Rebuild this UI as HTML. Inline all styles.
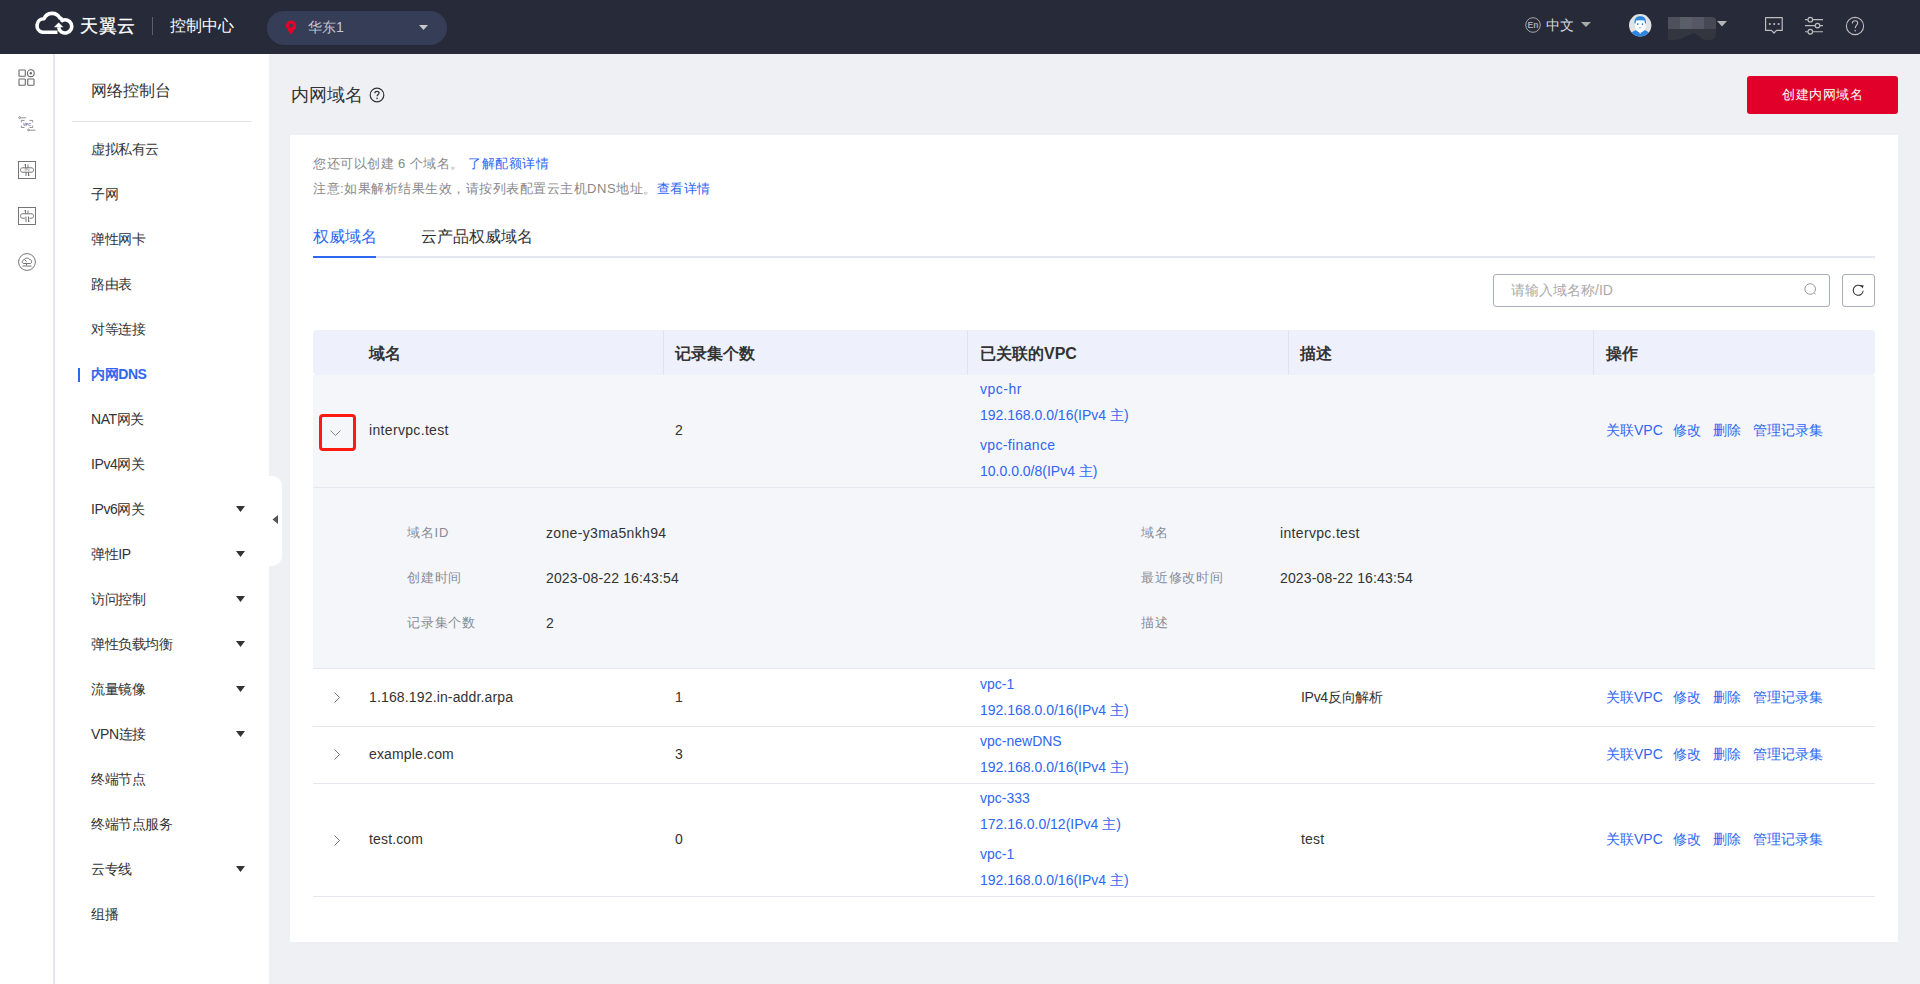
<!DOCTYPE html>
<html><head><meta charset="utf-8">
<style>
*{box-sizing:border-box;margin:0;padding:0}
html,body{width:1920px;height:984px;overflow:hidden}
body{font-family:"Liberation Sans",sans-serif;background:#eff0f4;color:#333;position:relative;font-size:14px}
.abs{position:absolute}
.t{position:absolute;white-space:nowrap;line-height:1}
#top{position:absolute;left:0;top:0;width:1920px;height:54px;background:#262a39}
#rail{position:absolute;left:0;top:54px;width:55px;height:930px;background:#fff;border-right:2px solid #e3e6ef}
#side{position:absolute;left:55px;top:54px;width:214px;height:930px;background:#fff}
.si{left:91px;font-size:14px;color:#333;line-height:20px;letter-spacing:-0.4px}
.th{top:345px;font-size:16px;font-weight:bold;color:#333;line-height:18px}
.td{font-size:14px;color:#333;line-height:16px;letter-spacing:0.15px}
.lk{font-size:14px;color:#2f66f2;line-height:16px}
.dl{font-size:13px;color:#878c96;line-height:16px;letter-spacing:0.8px}
.act{color:#2f66f2;font-weight:bold}
</style></head><body>
<div id="top">
  <!-- logo -->
  <svg class="abs" style="left:30px;top:8px" width="50" height="32" viewBox="0 0 50 32">
    <path d="M27.5 24.3 H12.3 A6.9 6.9 0 0 1 14.0 10.7 A8.75 8.75 0 0 1 29.8 10 A2.6 2.6 0 0 1 32 12.6 A6.6 6.6 0 1 1 28.6 19.3" fill="none" stroke="#fff" stroke-width="3.6" stroke-linejoin="round"/>
    <path d="M23.8 19.2 H33.4 L28.7 14.6 Z" fill="#fff"/>
  </svg>
  <div class="t" style="left:80px;top:16px;font-size:18px;color:#fff;line-height:20px;letter-spacing:0.6px;-webkit-text-stroke:0.3px #fff">天翼云</div>
  <div class="abs" style="left:152px;top:17px;width:1px;height:18px;background:#5a5f6e"></div>
  <div class="t" style="left:170px;top:18px;font-size:16px;color:#fff">控制中心</div>
  <div class="abs" style="left:267px;top:11px;width:180px;height:34px;border-radius:17px;background:#353d57"></div>
  <svg class="abs" style="left:285px;top:20px" width="12" height="15" viewBox="0 0 12 15"><path d="M6 14.5 C6 14.5 0.8 8.5 0.8 5.6 A5.2 5.2 0 0 1 11.2 5.6 C11.2 8.5 6 14.5 6 14.5Z" fill="#e60027"/><circle cx="6" cy="5.6" r="2" fill="#353d57"/></svg>
  <div class="t" style="left:308px;top:20px;font-size:14px;color:#c5c8d2">华东1</div>
  <svg class="abs" style="left:419px;top:25px" width="9" height="5"><path d="M0 0 L9 0 L4.5 5Z" fill="#c8c8cc"/></svg>

  <!-- right side -->
  <svg class="abs" style="left:1525px;top:17px" width="16" height="16" viewBox="0 0 16 16"><circle cx="8" cy="8" r="7.3" fill="none" stroke="#a8a8a8" stroke-width="1"/><text x="8" y="11.2" font-size="8.5" text-anchor="middle" fill="#a8a8a8" font-family="Liberation Sans" font-weight="bold">En</text></svg>
  <div class="t" style="left:1546px;top:18px;font-size:14px;color:#d6d8de">中文</div>
  <svg class="abs" style="left:1581px;top:22px" width="10" height="5"><path d="M0 0 L10 0 L5 5Z" fill="#aaa"/></svg>
  <!-- avatar -->
  <svg class="abs" style="left:1629px;top:14px" width="23" height="23" viewBox="0 0 23 23">
    <clipPath id="avc"><circle cx="11.2" cy="11.3" r="11.2"/></clipPath>
    <g clip-path="url(#avc)">
    <rect width="23" height="23" fill="#e2e3e6"/>
    <path d="M1 23 C2 17.5 5 16.5 8 16 L11.2 20 L14.5 16 C17.5 16.5 20.5 17.5 21.5 23Z" fill="#2d86e0"/>
    <path d="M6 6.5 H16.5 V13 C16.5 16 14 18 11.2 18 C8.5 18 6 16 6 13Z" fill="#fff"/>
    <path d="M5.5 9.5 C5 4 8 2.2 11.2 2.2 C14.5 2.2 17.5 4 17 9.5 L16 9.5 L15.5 6.5 C13 6 9.5 6 7 6.5 L6.5 9.5Z" fill="#2d86e0"/>
    <rect x="8" y="9.3" width="1.4" height="1.8" fill="#3b7fd0"/><rect x="12.8" y="9.3" width="1.4" height="1.8" fill="#3b7fd0"/>
    <rect x="10" y="13.2" width="2.4" height="0.9" fill="#8fb6e6"/>
    </g>
  </svg>
  <div class="abs" style="left:1668px;top:17px;width:12px;height:12px;background:#4e505b"></div>
  <div class="abs" style="left:1680px;top:17px;width:12px;height:12px;background:#5a5e69"></div>
  <div class="abs" style="left:1692px;top:17px;width:12px;height:12px;background:#565764"></div>
  <div class="abs" style="left:1704px;top:17px;width:12px;height:12px;background:#464853;border-radius:0 4px 0 0"></div>
  <svg class="abs" style="left:1668px;top:29px" width="48" height="12" viewBox="0 0 48 12"><path d="M0 0 H48 V5 C48 9 45 11 40 11 C35 11 33 9 31 7 L26 4 L14 9 C11 11 7 11 0 11Z" fill="#33363f"/></svg>
  <svg class="abs" style="left:1717px;top:21px" width="10" height="6"><path d="M0 0 L10 0 L5 5.5Z" fill="#b5b5b8"/></svg>
  <!-- message -->
  <svg class="abs" style="left:1764px;top:16px" width="20" height="20" viewBox="0 0 20 20"><path d="M1.6 1.6 H18.2 V14.4 H12.6 L10 17 L7.4 14.4 H1.6 Z" fill="none" stroke="#bebebe" stroke-width="1.2" stroke-linejoin="round"/><rect x="4.9" y="7.1" width="1.8" height="1.8" fill="#bebebe"/><rect x="9.3" y="7.1" width="1.8" height="1.8" fill="#bebebe"/><rect x="13.7" y="7.1" width="1.8" height="1.8" fill="#bebebe"/></svg>
  <!-- sliders -->
  <svg class="abs" style="left:1804px;top:16px" width="20" height="20" viewBox="0 0 20 20"><g stroke="#bebebe" stroke-width="1.2" fill="none"><path d="M1 3.7 H3.8 M8.8 3.7 H19"/><circle cx="6.3" cy="3.7" r="2.3"/><path d="M1 9.6 H11 M16 9.6 H19"/><circle cx="13.5" cy="9.6" r="2.3"/><path d="M1 15.75 H3.8 M8.8 15.75 H19"/><circle cx="6.3" cy="15.75" r="2.3"/></g></svg>
  <!-- help -->
  <svg class="abs" style="left:1845px;top:16px" width="20" height="20" viewBox="0 0 20 20"><circle cx="10" cy="10" r="8.6" fill="none" stroke="#bebebe" stroke-width="1.1"/><path d="M7.3 7.4 C7.3 5.6 8.5 4.7 10 4.7 C11.6 4.7 12.7 5.7 12.7 7.1 C12.7 9 10.2 9.6 10.2 12.3" fill="none" stroke="#bebebe" stroke-width="1.1"/><circle cx="10.2" cy="14.7" r="0.8" fill="#bebebe"/></svg>
</div>


<div id="rail">
  <svg class="abs" style="left:18px;top:15px" width="18" height="18" viewBox="0 0 18 18"><g fill="none" stroke="#6a6a6a" stroke-width="1.1"><rect x="1" y="1" width="6.3" height="6.3" rx="0.6"/><circle cx="12.8" cy="4.2" r="3.4"/><rect x="1" y="10" width="6.3" height="6.3" rx="0.6"/><rect x="9.7" y="10" width="6.3" height="6.3" rx="0.6"/></g><circle cx="12.8" cy="4.2" r="1.2" fill="#6a6a6a"/></svg>
  <svg class="abs" style="left:18px;top:62px" width="19" height="16" viewBox="0 0 19 16"><g fill="none" stroke="#777" stroke-width="0.8"><circle cx="1.6" cy="1.6" r="0.9"/><path d="M2.5 1.8 H8.2"/><path d="M3.3 6.3 V4.4 H6.5 M11.5 4.4 H14.7 V6.3 M14.7 9.6 V11.5 H11.5 M6.5 11.5 H3.3 V9.6"/><circle cx="10.5" cy="14" r="0.9"/><path d="M11.4 14.2 H17.5"/></g><text x="9" y="9.6" font-size="4" text-anchor="middle" fill="#6a5a9a" font-family="Liberation Sans" font-weight="bold">VPC</text></svg>
  <svg class="abs" style="left:18px;top:107px" width="18" height="18" viewBox="0 0 18 18"><g fill="none" stroke="#666" stroke-width="0.9"><rect x="0.5" y="0.5" width="17" height="17"/><path d="M4 6.8 C2 7.2 2 10.8 4 11.2 H14 C16 10.8 16 7.2 14 6.8 Z"/><path d="M7.5 6.8 V3 L6.5 4.3 M10 6.8 V3.5 M8 11.2 V15 M10.5 11.2 V15 L11.5 13.7"/></g><text x="9" y="10.3" font-size="3.5" text-anchor="middle" fill="#666" font-family="Liberation Sans">IPv</text></svg>
  <svg class="abs" style="left:18px;top:153px" width="18" height="18" viewBox="0 0 18 18"><g fill="none" stroke="#666" stroke-width="0.9"><rect x="0.5" y="0.5" width="17" height="17"/><path d="M4 6.8 C2 7.2 2 10.8 4 11.2 M14 6.8 C16 7.2 16 10.8 14 11.2 M4 6.8 H14 M4 11.2 H7 M11.5 11.2 H14"/><path d="M7.5 6.8 V3 L6.5 4.3 M10 6.8 V3.5 M8 9.5 V15 M10.5 9.5 V15 L11.5 13.7"/></g></svg>
  <svg class="abs" style="left:18px;top:199px" width="18" height="18" viewBox="0 0 18 18"><g fill="none" stroke="#666" stroke-width="0.9"><circle cx="9" cy="9" r="8.4"/><path d="M6 10.5 C3.5 10.5 3.8 7 6 7 C6.5 4.5 11 4.5 11.5 6.5 C14 6 14.5 10.5 12 10.5 Z"/><path d="M8.5 10.5 V12.5 M4.5 13 H13.5"/><path d="M7 7 L8.5 8.5"/></g></svg>
</div>
<div id="side">
  <div class="t" style="left:36px;top:28px;font-size:16px;color:#333;line-height:18px">网络控制台</div>
  <div class="abs" style="left:17px;top:67px;width:180px;height:1px;background:#e1e4ee"></div>
</div>
<div id="sideitems">
<div class="t si" style="top:139px">虚拟私有云</div>
<div class="t si" style="top:184px">子网</div>
<div class="t si" style="top:229px">弹性网卡</div>
<div class="t si" style="top:274px">路由表</div>
<div class="t si" style="top:319px">对等连接</div>
<div class="abs" style="left:78px;top:368px;width:2px;height:14px;background:#2f66f2"></div>
<div class="t si act" style="top:364px">内网DNS</div>
<div class="t si" style="top:409px">NAT网关</div>
<div class="t si" style="top:454px">IPv4网关</div>
<div class="t si" style="top:499px">IPv6网关</div>
<svg class="abs" style="left:236px;top:506px" width="9" height="6"><path d="M0 0 L9 0 L4.5 6Z" fill="#333"/></svg>
<div class="t si" style="top:544px">弹性IP</div>
<svg class="abs" style="left:236px;top:551px" width="9" height="6"><path d="M0 0 L9 0 L4.5 6Z" fill="#333"/></svg>
<div class="t si" style="top:589px">访问控制</div>
<svg class="abs" style="left:236px;top:596px" width="9" height="6"><path d="M0 0 L9 0 L4.5 6Z" fill="#333"/></svg>
<div class="t si" style="top:634px">弹性负载均衡</div>
<svg class="abs" style="left:236px;top:641px" width="9" height="6"><path d="M0 0 L9 0 L4.5 6Z" fill="#333"/></svg>
<div class="t si" style="top:679px">流量镜像</div>
<svg class="abs" style="left:236px;top:686px" width="9" height="6"><path d="M0 0 L9 0 L4.5 6Z" fill="#333"/></svg>
<div class="t si" style="top:724px">VPN连接</div>
<svg class="abs" style="left:236px;top:731px" width="9" height="6"><path d="M0 0 L9 0 L4.5 6Z" fill="#333"/></svg>
<div class="t si" style="top:769px">终端节点</div>
<div class="t si" style="top:814px">终端节点服务</div>
<div class="t si" style="top:859px">云专线</div>
<svg class="abs" style="left:236px;top:866px" width="9" height="6"><path d="M0 0 L9 0 L4.5 6Z" fill="#333"/></svg>
<div class="t si" style="top:904px">组播</div>
</div>
<div class="abs" style="left:269px;top:476px;width:13px;height:90px;background:#fff;border-radius:0 10px 10px 0"></div>
<svg class="abs" style="left:272px;top:515px" width="7" height="9"><path d="M6 0 L6 9 L0.5 4.5Z" fill="#555"/></svg>


<!-- main -->
<div class="t" style="left:291px;top:85px;font-size:18px;color:#333;line-height:20px">内网域名</div>
<svg class="abs" style="left:369px;top:87px" width="16" height="16" viewBox="0 0 16 16"><circle cx="8" cy="8" r="6.8" fill="none" stroke="#333" stroke-width="1.2"/><path d="M5.9 6.3 C5.9 5 6.8 4.3 8 4.3 C9.2 4.3 10.1 5 10.1 6.1 C10.1 7.5 8.1 7.7 8.1 9.3" fill="none" stroke="#333" stroke-width="1.2"/><circle cx="8.1" cy="11.4" r="0.8" fill="#333"/></svg>
<div class="abs" style="left:1747px;top:76px;width:151px;height:38px;background:#e0002a;border-radius:3px"></div>
<div class="t" style="left:1782px;top:87px;font-size:13px;color:#fff;line-height:15px;letter-spacing:0.6px">创建内网域名</div>

<div class="abs" style="left:290px;top:135px;width:1608px;height:807px;background:#fff"></div>
<div class="t" style="left:313px;top:156px;font-size:13px;color:#888;line-height:15px;letter-spacing:0.5px">您还可以创建 6 个域名。 <span style="color:#2f66f2">了解配额详情</span></div>
<div class="t" style="left:313px;top:181px;font-size:13px;color:#888;line-height:15px;letter-spacing:0.5px">注意:如果解析结果生效，请按列表配置云主机DNS地址。<span style="color:#2f66f2">查看详情</span></div>

<div class="t" style="left:313px;top:228px;font-size:16px;color:#2f66f2;line-height:18px">权威域名</div>
<div class="t" style="left:421px;top:228px;font-size:16px;color:#333;line-height:18px">云产品权威域名</div>
<div class="abs" style="left:313px;top:256px;width:1562px;height:2px;background:#e4e7ef"></div>
<div class="abs" style="left:313px;top:256px;width:63px;height:2px;background:#2f66f2"></div>

<div class="abs" style="left:1493px;top:274px;width:337px;height:33px;border:1px solid #a9aeba;border-radius:3px;background:#fff"></div>
<div class="t" style="left:1511px;top:282px;font-size:14px;color:#aaa;line-height:16px">请输入域名称/ID</div>
<svg class="abs" style="left:1804px;top:283px" width="13" height="13" viewBox="0 0 13 13"><circle cx="6.2" cy="6" r="5.3" fill="none" stroke="#9a9a9a" stroke-width="1"/><path d="M10 9.8 L11.6 11.4" stroke="#9a9a9a" stroke-width="1"/></svg>
<div class="abs" style="left:1842px;top:274px;width:33px;height:33px;border:1px solid #a9aeba;border-radius:3px;background:#fff"></div>
<svg class="abs" style="left:1852px;top:284px" width="13" height="13" viewBox="0 0 13 13"><path d="M11.2 6.8 A5 5 0 1 1 9.6 2.6" fill="none" stroke="#333" stroke-width="1.05"/><path d="M8.4 1.1 L11.8 1.4 L10.4 4.4 Z" fill="#333"/></svg>

<!-- table header -->
<div class="abs" style="left:313px;top:330px;width:1562px;height:45px;background:#eef1fb;border-radius:4px"></div>
<div class="abs" style="left:663px;top:330px;width:1px;height:45px;background:#dfe3ec"></div>
<div class="abs" style="left:967px;top:330px;width:1px;height:45px;background:#dfe3ec"></div>
<div class="abs" style="left:1288px;top:330px;width:1px;height:45px;background:#dfe3ec"></div>
<div class="abs" style="left:1593px;top:330px;width:1px;height:45px;background:#dfe3ec"></div>
<div class="t th" style="left:369px">域名</div>
<div class="t th" style="left:675px">记录集个数</div>
<div class="t th" style="left:980px">已关联的VPC</div>
<div class="t th" style="left:1300px">描述</div>
<div class="t th" style="left:1606px">操作</div>

<!-- row1 expanded -->
<div class="abs" style="left:313px;top:375px;width:1562px;height:293px;background:#f5f6fa"></div>
<div class="abs" style="left:313px;top:487px;width:1562px;height:1px;background:#e4e7ef"></div>
<div class="abs" style="left:319px;top:414px;width:37px;height:37px;border:3px solid #ff1a10;border-radius:4px"></div>
<svg class="abs" style="left:330px;top:430px" width="11" height="7"><path d="M0.5 0.5 L5.5 5.5 L10.5 0.5" fill="none" stroke="#777" stroke-width="0.9"/></svg>
<div class="t td" style="left:369px;top:422px;letter-spacing:0.33px">intervpc.test</div>
<div class="t td" style="left:675px;top:422px">2</div>
<div class="t lk" style="left:980px;top:381px;letter-spacing:0.5px">vpc-hr</div>
<div class="t lk" style="left:980px;top:407px">192.168.0.0/16(IPv4 主)</div>
<div class="t lk" style="left:980px;top:437px;letter-spacing:0.35px">vpc-finance</div>
<div class="t lk" style="left:980px;top:463px">10.0.0.0/8(IPv4 主)</div>
<div class="t lk" style="left:1606px;top:422px">关联VPC</div>
<div class="t lk" style="left:1673px;top:422px">修改</div>
<div class="t lk" style="left:1713px;top:422px">删除</div>
<div class="t lk" style="left:1753px;top:422px">管理记录集</div>

<div class="t dl" style="left:407px;top:525px">域名ID</div>
<div class="t td" style="left:546px;top:525px;letter-spacing:0.35px">zone-y3ma5nkh94</div>
<div class="t dl" style="left:407px;top:570px">创建时间</div>
<div class="t td" style="left:546px;top:570px">2023-08-22 16:43:54</div>
<div class="t dl" style="left:407px;top:615px">记录集个数</div>
<div class="t td" style="left:546px;top:615px">2</div>
<div class="t dl" style="left:1141px;top:525px">域名</div>
<div class="t td" style="left:1280px;top:525px;letter-spacing:0.33px">intervpc.test</div>
<div class="t dl" style="left:1141px;top:570px">最近修改时间</div>
<div class="t td" style="left:1280px;top:570px">2023-08-22 16:43:54</div>
<div class="t dl" style="left:1141px;top:615px">描述</div>
<div class="abs" style="left:313px;top:668px;width:1562px;height:1px;background:#e4e7ef"></div>

<!-- row2 -->
<svg class="abs" style="left:334px;top:692px" width="7" height="12"><path d="M0.5 0.5 L5.5 5.5 L0.5 10.5" fill="none" stroke="#777" stroke-width="1"/></svg>
<div class="t td" style="left:369px;top:689px">1.168.192.in-addr.arpa</div>
<div class="t td" style="left:675px;top:689px">1</div>
<div class="t lk" style="left:980px;top:676px">vpc-1</div>
<div class="t lk" style="left:980px;top:702px">192.168.0.0/16(IPv4 主)</div>
<div class="t td" style="left:1301px;top:689px;letter-spacing:-0.3px">IPv4反向解析</div>
<div class="t lk" style="left:1606px;top:689px">关联VPC</div>
<div class="t lk" style="left:1673px;top:689px">修改</div>
<div class="t lk" style="left:1713px;top:689px">删除</div>
<div class="t lk" style="left:1753px;top:689px">管理记录集</div>
<div class="abs" style="left:313px;top:726px;width:1562px;height:1px;background:#e4e7ef"></div>

<!-- row3 -->
<svg class="abs" style="left:334px;top:749px" width="7" height="12"><path d="M0.5 0.5 L5.5 5.5 L0.5 10.5" fill="none" stroke="#777" stroke-width="1"/></svg>
<div class="t td" style="left:369px;top:746px">example.com</div>
<div class="t td" style="left:675px;top:746px">3</div>
<div class="t lk" style="left:980px;top:733px">vpc-newDNS</div>
<div class="t lk" style="left:980px;top:759px">192.168.0.0/16(IPv4 主)</div>
<div class="t lk" style="left:1606px;top:746px">关联VPC</div>
<div class="t lk" style="left:1673px;top:746px">修改</div>
<div class="t lk" style="left:1713px;top:746px">删除</div>
<div class="t lk" style="left:1753px;top:746px">管理记录集</div>
<div class="abs" style="left:313px;top:783px;width:1562px;height:1px;background:#e4e7ef"></div>

<!-- row4 -->
<svg class="abs" style="left:334px;top:835px" width="7" height="12"><path d="M0.5 0.5 L5.5 5.5 L0.5 10.5" fill="none" stroke="#777" stroke-width="1"/></svg>
<div class="t td" style="left:369px;top:831px">test.com</div>
<div class="t td" style="left:675px;top:831px">0</div>
<div class="t lk" style="left:980px;top:790px">vpc-333</div>
<div class="t lk" style="left:980px;top:816px">172.16.0.0/12(IPv4 主)</div>
<div class="t lk" style="left:980px;top:846px">vpc-1</div>
<div class="t lk" style="left:980px;top:872px">192.168.0.0/16(IPv4 主)</div>
<div class="t td" style="left:1301px;top:831px">test</div>
<div class="t lk" style="left:1606px;top:831px">关联VPC</div>
<div class="t lk" style="left:1673px;top:831px">修改</div>
<div class="t lk" style="left:1713px;top:831px">删除</div>
<div class="t lk" style="left:1753px;top:831px">管理记录集</div>
<div class="abs" style="left:313px;top:896px;width:1562px;height:1px;background:#e4e7ef"></div>
</body></html>
